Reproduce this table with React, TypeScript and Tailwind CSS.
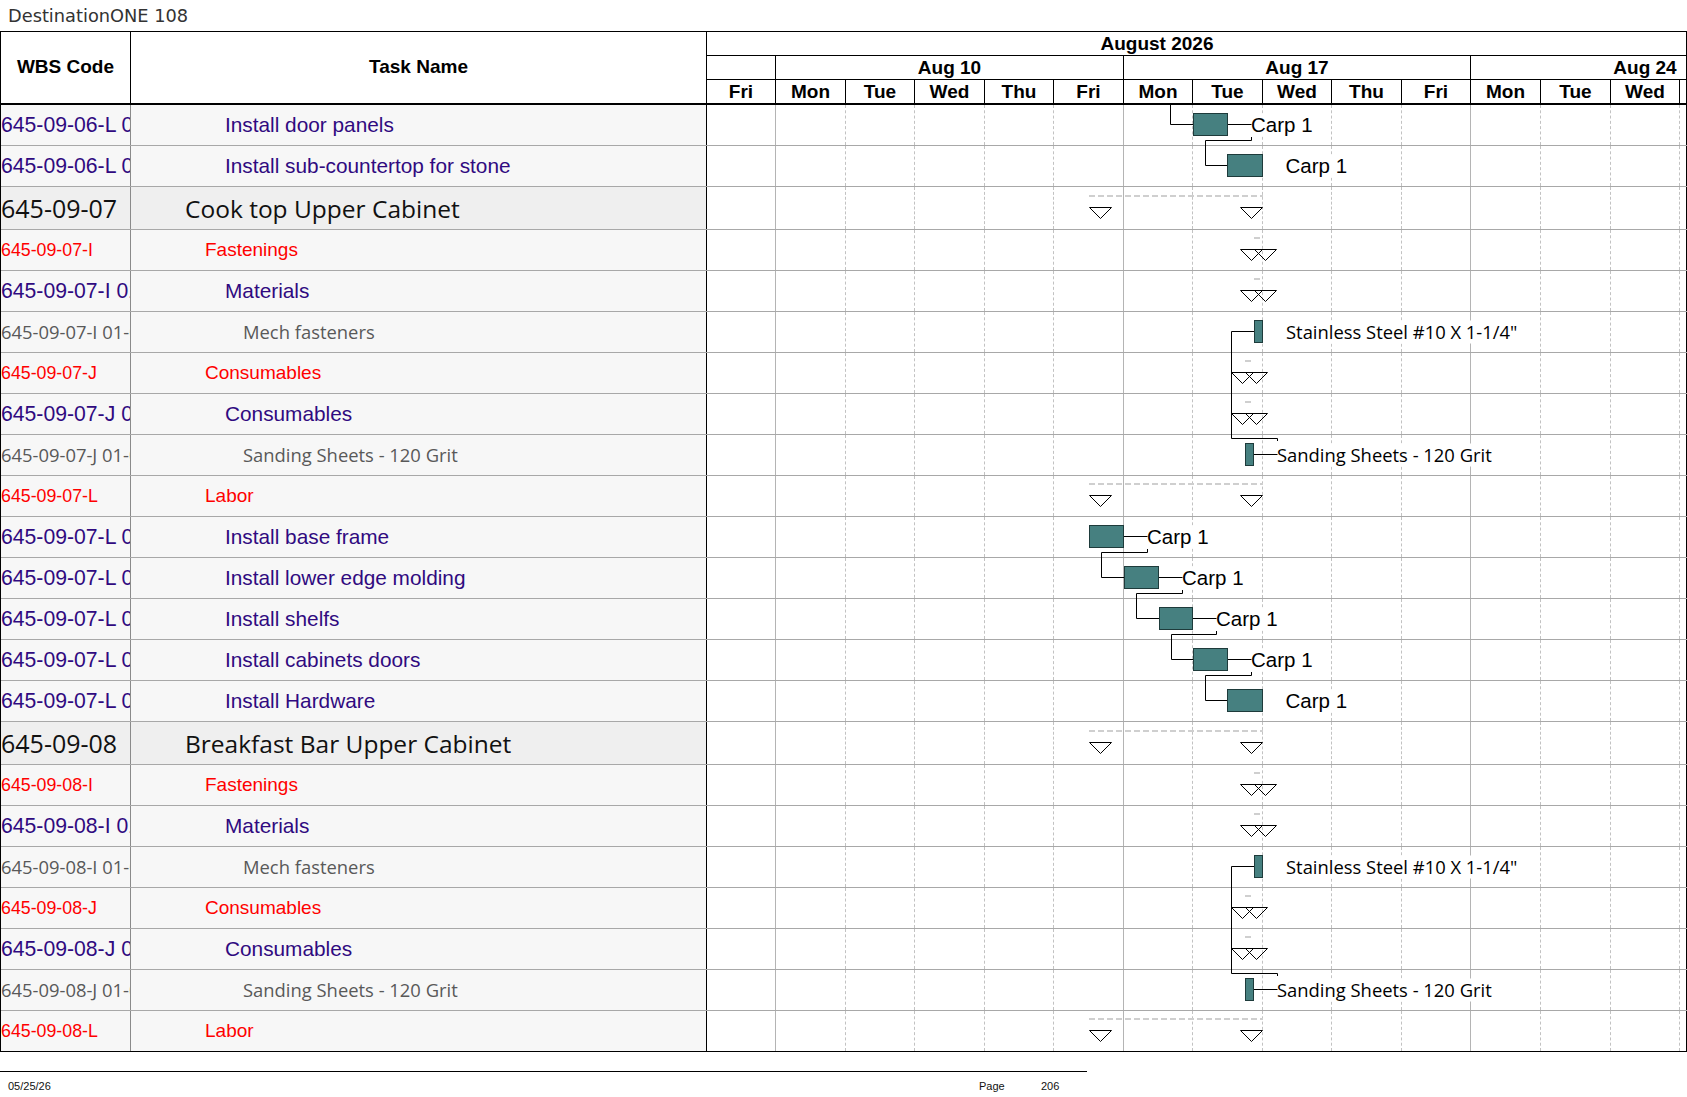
import React from "react";

type Kind = "group" | "red" | "purple" | "gray";

interface Row {
	wbs: string;
	name: string;
	kind: Kind;
}

const rows: Row[] = [
	{ wbs: "645-09-06-L 01", name: "Install door panels", kind: "purple" },
	{ wbs: "645-09-06-L 01", name: "Install sub-countertop for stone", kind: "purple" },
	{ wbs: "645-09-07", name: "Cook top Upper Cabinet", kind: "group" },
	{ wbs: "645-09-07-I", name: "Fastenings", kind: "red" },
	{ wbs: "645-09-07-I 01", name: "Materials", kind: "purple" },
	{ wbs: "645-09-07-I 01-01", name: "Mech fasteners", kind: "gray" },
	{ wbs: "645-09-07-J", name: "Consumables", kind: "red" },
	{ wbs: "645-09-07-J 01", name: "Consumables", kind: "purple" },
	{ wbs: "645-09-07-J 01-01", name: "Sanding Sheets - 120 Grit", kind: "gray" },
	{ wbs: "645-09-07-L", name: "Labor", kind: "red" },
	{ wbs: "645-09-07-L 01", name: "Install base frame", kind: "purple" },
	{ wbs: "645-09-07-L 02", name: "Install lower edge molding", kind: "purple" },
	{ wbs: "645-09-07-L 03", name: "Install shelfs", kind: "purple" },
	{ wbs: "645-09-07-L 04", name: "Install cabinets doors", kind: "purple" },
	{ wbs: "645-09-07-L 05", name: "Install Hardware", kind: "purple" },
	{ wbs: "645-09-08", name: "Breakfast Bar Upper Cabinet", kind: "group" },
	{ wbs: "645-09-08-I", name: "Fastenings", kind: "red" },
	{ wbs: "645-09-08-I 01", name: "Materials", kind: "purple" },
	{ wbs: "645-09-08-I 01-01", name: "Mech fasteners", kind: "gray" },
	{ wbs: "645-09-08-J", name: "Consumables", kind: "red" },
	{ wbs: "645-09-08-J 01", name: "Consumables", kind: "purple" },
	{ wbs: "645-09-08-J 01-01", name: "Sanding Sheets - 120 Grit", kind: "gray" },
	{ wbs: "645-09-08-L", name: "Labor", kind: "red" },
];

const wbsClass: Record<Kind, string> = {
	group: "font-['Open_Sans',sans-serif] text-[25px] text-[#111111] pt-[2px]",
	red: "font-['Liberation_Sans',Arial,sans-serif] text-[17.8px] text-[#ff0000]",
	purple: "font-['Liberation_Sans',Arial,sans-serif] text-[21.2px] text-[#300a80]",
	gray: "font-['Open_Sans',sans-serif] text-[18.4px] text-[#595959]",
};

const nameClass: Record<Kind, string> = {
	group: "pl-[54px] font-['Open_Sans',sans-serif] text-[24.5px] text-[#111111] pt-[2px]",
	red: "pl-[74px] font-['Liberation_Sans',Arial,sans-serif] text-[19px] text-[#ff0000]",
	purple: "pl-[94px] font-['Liberation_Sans',Arial,sans-serif] text-[20.8px] text-[#300a80]",
	gray: "pl-[112px] font-['Open_Sans',sans-serif] text-[18.4px] text-[#595959]",
};

const days = ["Fri", "Mon", "Tue", "Wed", "Thu", "Fri", "Mon", "Tue", "Wed", "Thu", "Fri", "Mon", "Tue", "Wed"];
const dayW = [
	"w-[69px]", "w-[70px]", "w-[69px]", "w-[70px]", "w-[69px]", "w-[70px]", "w-[69px]",
	"w-[70px]", "w-[69px]", "w-[70px]", "w-[69px]", "w-[70px]", "w-[70px]", "w-[69px]",
];
const weekEnd = (i: number) => i === 0 || i === 5 || i === 10;

// top pixel of every body row, body starts at y=105
let acc = 105;
const tops = rows.map((r) => {
	const t = acc;
	acc += r.kind === "group" ? 43 : 41;
	return t;
});
const cy = (i: number) => tops[i] + 19.5;

const bars: { i: number; x1: number; x2: number; label: string; lx: number; lw: number; calibri?: boolean }[] = [
	{ i: 0, x1: 1192.5, x2: 1226.5, label: "Carp 1", lx: 1250, lw: 63 },
	{ i: 1, x1: 1226.5, x2: 1261.5, label: "Carp 1", lx: 1284.5, lw: 63 },
	{ i: 5, x1: 1253.5, x2: 1261.5, label: "Stainless Steel #10 X 1-1/4\"", lx: 1285, lw: 235, calibri: true },
	{ i: 8, x1: 1244.5, x2: 1252.5, label: "Sanding Sheets - 120 Grit", lx: 1276, lw: 217, calibri: true },
	{ i: 10, x1: 1088.5, x2: 1122.5, label: "Carp 1", lx: 1146, lw: 63 },
	{ i: 11, x1: 1123.5, x2: 1157.5, label: "Carp 1", lx: 1181, lw: 63 },
	{ i: 12, x1: 1158.5, x2: 1191.5, label: "Carp 1", lx: 1215, lw: 63 },
	{ i: 13, x1: 1192.5, x2: 1226.5, label: "Carp 1", lx: 1250, lw: 63 },
	{ i: 14, x1: 1226.5, x2: 1261.5, label: "Carp 1", lx: 1284.5, lw: 63 },
	{ i: 18, x1: 1253.5, x2: 1261.5, label: "Stainless Steel #10 X 1-1/4\"", lx: 1285, lw: 235, calibri: true },
	{ i: 21, x1: 1244.5, x2: 1252.5, label: "Sanding Sheets - 120 Grit", lx: 1276, lw: 217, calibri: true },
];

// summary markers: [row, dash start, dash end, left triangle, right triangle]
const summaries: [number, number, number, number, number][] = [
	[2, 1088, 1262, 1088.5, 1239.5],
	[3, 1253, 1262, 1239.5, 1253.5],
	[4, 1253, 1262, 1239.5, 1253.5],
	[6, 1244, 1253, 1230.5, 1244.5],
	[7, 1244, 1253, 1230.5, 1244.5],
	[9, 1088, 1262, 1088.5, 1239.5],
	[15, 1088, 1262, 1088.5, 1239.5],
	[16, 1253, 1262, 1239.5, 1253.5],
	[17, 1253, 1262, 1239.5, 1253.5],
	[19, 1244, 1253, 1230.5, 1244.5],
	[20, 1244, 1253, 1230.5, 1244.5],
	[22, 1088, 1262, 1088.5, 1239.5],
];

function chainLink(i: number) {
	const a = bars.find((b) => b.i === i)!;
	const b = bars.find((x) => x.i === i + 1)!;
	const lx = a.x2 + 24;
	const y = cy(i);
	return (
		<g key={`l${i}`}>
			<path d={`M${a.x2} ${y} H${lx}`} />
			<path d={`M${lx} ${y + 12.5} V${y + 16} H${a.x1 + 12} V${cy(i + 1)} H${b.x1}`} />
		</g>
	);
}

function steelLink(i: number) {
	const s = i + 3;
	return (
		<g key={`s${i}`}>
			<path d={`M1253.5 ${cy(i)} H1230.5 V${tops[s] + 3.5} H1276.5 V${tops[s] + 6}`} />
			<path d={`M1252.5 ${cy(s)} H1276.5`} />
		</g>
	);
}

function Gantt() {
	return (
		<svg
			className="absolute left-[707px] top-0"
			width={979}
			height={947}
			viewBox="707 105 979 947"
		>
			{summaries.map(([i, d1, d2, t1, t2]) => {
				const g = rows[i].kind === "group";
				const dy = tops[i] + (g ? 9 : 8);
				const ty = tops[i] + (g ? 20.5 : 19.5);
				return (
					<g key={`m${i}`}>
						<path d={`M${d1} ${dy} H${d2}`} stroke="#cfcfcf" strokeWidth={2} strokeDasharray="6 3" />
						<polygon points={`${t1},${ty} ${t1 + 22},${ty} ${t1 + 11},${ty + 11}`} fill="none" stroke="#000" />
						<polygon points={`${t2},${ty} ${t2 + 22},${ty} ${t2 + 11},${ty + 11}`} fill="none" stroke="#000" />
					</g>
				);
			})}
			{bars.map((b) => (
				<rect
					key={`w${b.i}`}
					x={b.lx + 1}
					y={cy(b.i) - 11}
					width={b.lw}
					height={23}
					fill="#ffffff"
				/>
			))}
			<g stroke="#000" fill="none">
				<path d={`M1169.5 105 V${cy(0)} H1192.5`} />
				{[0, 10, 11, 12, 13].map(chainLink)}
				{[5, 18].map(steelLink)}
			</g>
			{bars.map((b) => (
				<rect
					key={`b${b.i}`}
					x={b.x1}
					y={tops[b.i] + 8.5}
					width={b.x2 - b.x1}
					height={22}
					fill="#468080"
					stroke="#1e3b3b"
				/>
			))}
			{bars.map((b) => (
				<text
					key={`t${b.i}`}
					x={b.lx}
					y={cy(b.i) + (b.calibri ? 7 : 7.5)}
					fill="#000"
					className={
						b.calibri
							? "font-['Open_Sans',sans-serif] text-[18.4px]"
							: "font-['Liberation_Sans',Arial,sans-serif] text-[20.5px]"
					}
				>
					{b.label}
				</text>
			))}
		</svg>
	);
}

function TableRow({ row, last }: { row: Row; last: boolean }) {
	const group = row.kind === "group";
	const bg = group ? "bg-[#efefef]" : "bg-[#f7f7f7]";
	return (
		<div
			className={`flex ${group ? "h-[43px]" : "h-[41px]"} border-b ${last ? "border-black" : "border-[#a8a8a8]"}`}
		>
			<div
				className={`w-[130px] shrink-0 flex items-center overflow-hidden whitespace-nowrap border-r border-[#8a8a8a] ${bg} ${wbsClass[row.kind]}`}
			>
				{row.wbs}
			</div>
			<div
				className={`w-[576px] shrink-0 flex items-center overflow-hidden whitespace-nowrap border-r border-black ${bg} ${nameClass[row.kind]}`}
			>
				{row.name}
			</div>
			<div className="w-[980px] shrink-0 flex border-r border-black bg-white">
				{dayW.map((w, i) => (
					<div
						key={i}
						className={`${w} shrink-0 border-r ${weekEnd(i) ? "border-solid border-[#b4b4b4]" : "border-dashed border-[#c2c2c2]"}`}
					/>
				))}
				<div className="flex-1" />
			</div>
		</div>
	);
}

export default function App() {
	return (
		<div className="w-[1687px] h-[1097px] overflow-hidden bg-white text-black font-['Liberation_Sans',Arial,sans-serif]">
			<div className="h-[31px] flex items-center pl-2 pt-[1px] text-[17.8px] font-normal text-[#333333] font-['DejaVu_Sans',sans-serif]">
				DestinationONE 108
			</div>

			<div className="border-l border-black w-[1687px]">
				{/* header */}
				<div className="flex border-t border-black text-[19px] font-bold">
					<div className="w-[130px] h-[73px] shrink-0 flex items-center justify-center border-r border-b-2 border-black">
						WBS Code
					</div>
					<div className="w-[576px] h-[73px] shrink-0 flex items-center justify-center border-r border-b-2 border-black">
						Task Name
					</div>
					<div className="w-[980px] shrink-0 flex flex-col border-r border-black">
						<div className="h-[24px] flex items-center overflow-hidden border-b border-black">
							<div className="-ml-[280px] w-[1460px] shrink-0 text-center leading-none">August 2026</div>
						</div>
						<div className="h-[24px] flex border-b border-black leading-none">
							<div className="w-[69px] shrink-0 border-r border-black" />
							<div className="w-[348px] shrink-0 flex items-center justify-center border-r border-black">
								Aug 10
							</div>
							<div className="w-[347px] shrink-0 flex items-center justify-center border-r border-black">
								Aug 17
							</div>
							<div className="flex-1 flex overflow-hidden">
								<div className="w-[348px] shrink-0 flex items-center justify-center">Aug 24</div>
							</div>
						</div>
						<div className="h-[25px] flex border-b-2 border-black leading-none">
							{days.map((d, i) => (
								<div
									key={i}
									className={`${dayW[i]} shrink-0 flex items-center justify-center border-r border-black`}
								>
									{d}
								</div>
							))}
							<div className="flex-1" />
						</div>
					</div>
				</div>

				{/* body */}
				<div className="relative">
					{rows.map((r, i) => (
						<TableRow key={i} row={r} last={i === rows.length - 1} />
					))}
					<Gantt />
				</div>
			</div>

			{/* footer */}
			<div className="mt-[19px] w-[1087px] border-t border-black h-[30px] flex items-center text-[11px] text-[#111111]">
				<div className="w-[979px] shrink-0 pl-[8px]">05/25/26</div>
				<div className="w-[62px] shrink-0">Page</div>
				<div>206</div>
			</div>
		</div>
	);
}
